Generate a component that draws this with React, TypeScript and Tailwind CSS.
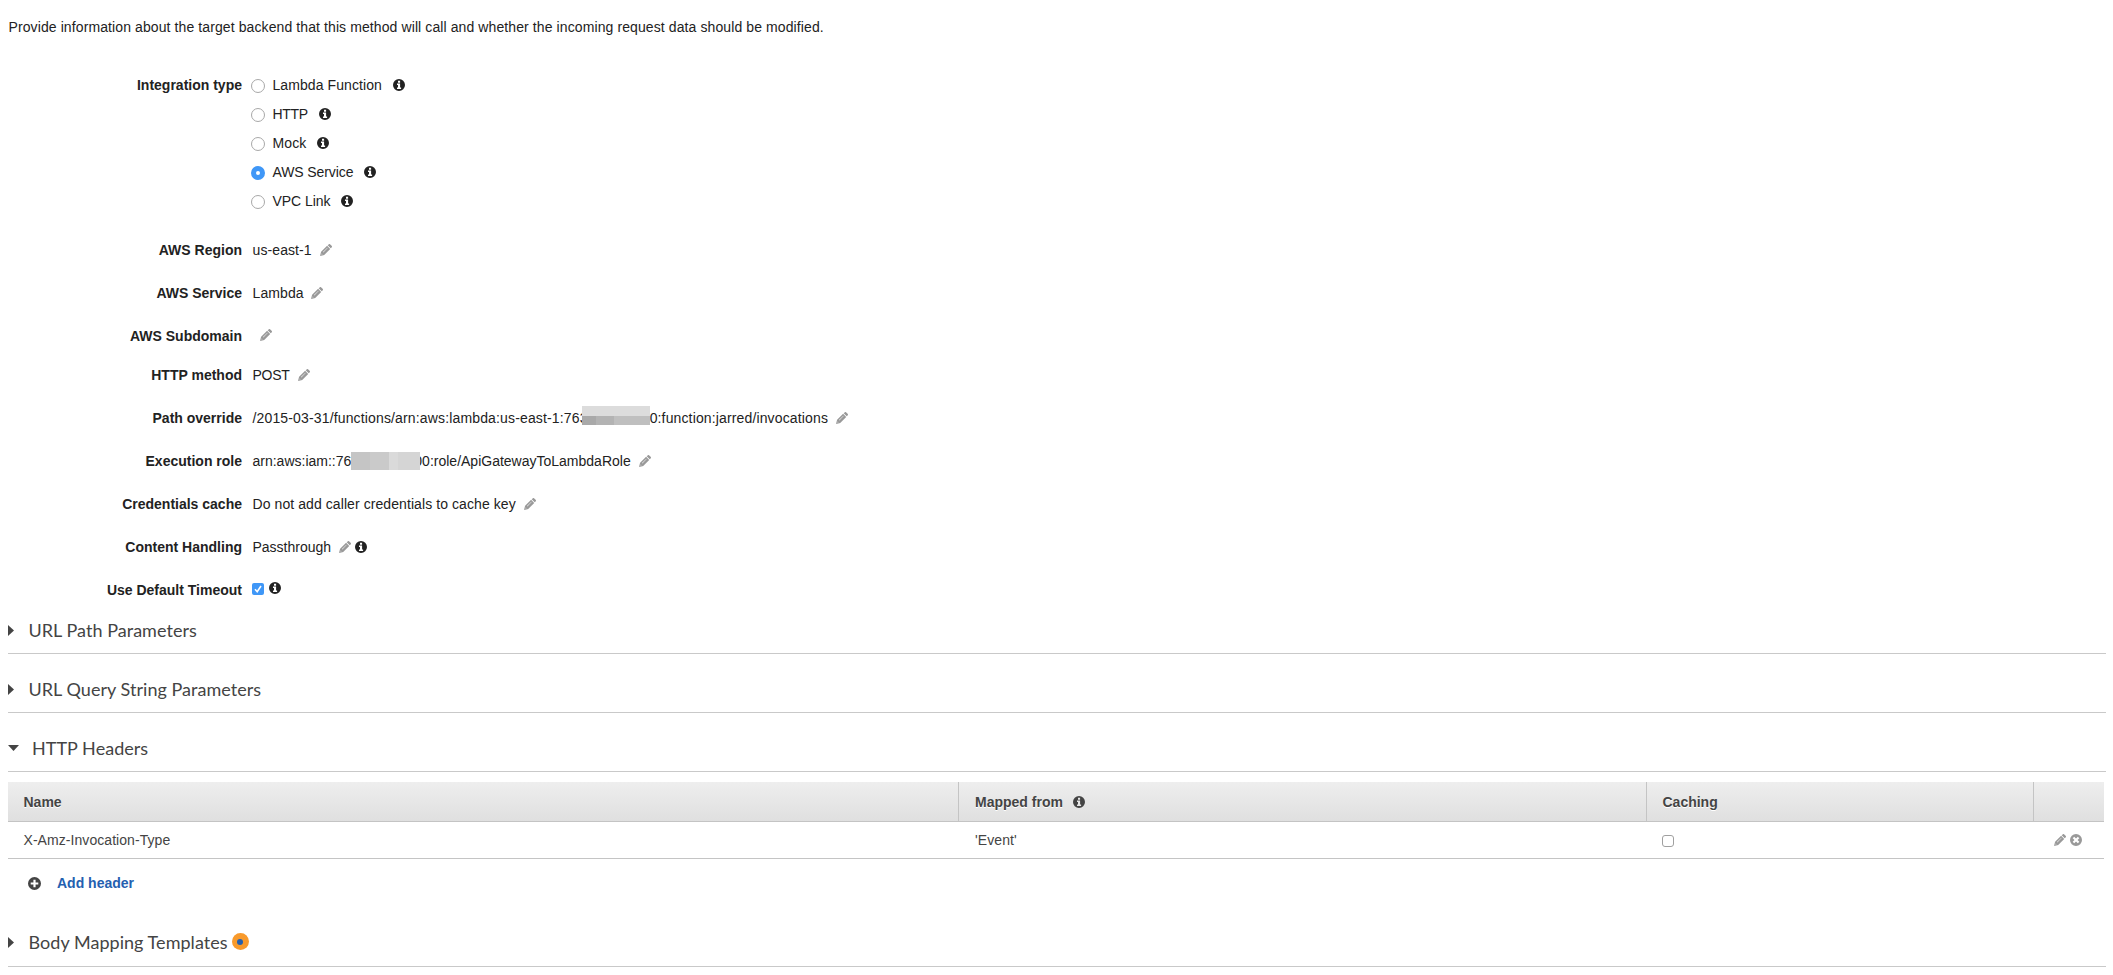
import { ReactNode, useState } from "react";

type SectionProps = {
  title: string;
  open?: boolean;
  className?: string;
  children?: ReactNode;
};

const integrationTypes = [
  { name: "Lambda Function", spacing: "tracking-[0.08px]" },
  { name: "HTTP", spacing: "tracking-[-0.35px]" },
  { name: "Mock", spacing: "tracking-[0.12px]" },
  { name: "AWS Service", spacing: "tracking-[-0.1px]" },
  { name: "VPC Link", spacing: "tracking-[-0.06px]" },
];

function InfoIcon({ className = "" }: { className?: string }) {
  return (
    <svg viewBox="0 0 24 24" className={`size-3 shrink-0 ${className}`} fill="currentColor">
      <path
        fillRule="evenodd"
        d="M12 0a12 12 0 1 0 0 24a12 12 0 0 0 0-24zM10 3.400h4.200v4h-4.200zM8 9.200h6.200v7.800h2v3H8v-3h2v-4.800H8z"
      />
    </svg>
  );
}

function PencilIcon({ className = "" }: { className?: string }) {
  return (
    <svg viewBox="0 0 24 24" className={`size-3 shrink-0 text-[#999] ${className}`} fill="currentColor">
      <path d="M17.200.800a2.400 2.400 0 0 1 3.400 0l2.600 2.600a2.400 2.400 0 0 1 0 3.400l-1.800 1.800-6-6z" />
      <path
        fillRule="evenodd"
        d="M14.200 3.600l6.200 6.200L8.400 21.800 0 24l2.200-8.400zM14.700 7.500l.6.600-8.700 8.700-.6-.6zM3.400 18.800l1.800 1.800-2.200.600z"
      />
    </svg>
  );
}

function RemoveIcon() {
  return (
    <svg viewBox="0 0 24 24" className="size-3 shrink-0 text-[#999]" fill="currentColor">
      <path
        fillRule="evenodd"
        d="M12 0a12 12 0 1 0 0 24a12 12 0 0 0 0-24zM8.400 5.400l3.600 3.600 3.600-3.600 3 3-3.600 3.600 3.600 3.600-3 3-3.600-3.600-3.600 3.600-3-3 3.600-3.600-3.600-3.600z"
      />
    </svg>
  );
}

function PlusIcon() {
  return (
    <svg viewBox="0 0 24 24" className="size-[13px] shrink-0 text-[#444]" fill="currentColor">
      <path
        fillRule="evenodd"
        d="M12 0a12 12 0 1 0 0 24a12 12 0 0 0 0-24zM10 5h4v5h5v4h-5v5h-4v-5H5v-4h5z"
      />
    </svg>
  );
}

function Field({ label, className = "h-[43px]", children }: { label: string; className?: string; children?: ReactNode }) {
  return (
    <div className={`flex items-start ${className}`}>
      <div className="w-[234px] shrink-0 text-right font-bold">{label}</div>
      <div className="ml-[10.5px] flex h-5 items-center whitespace-nowrap">{children}</div>
    </div>
  );
}

function SectionTitle({ title, open, className = "pb-[9px]", children }: SectionProps) {
  return (
    <div
      className={`flex h-[39px] items-center border-b border-[#c9c9c9] font-[Lato,sans-serif] text-[18px] text-[#444] ${className}`}
    >
      {open ? (
        <svg viewBox="0 0 11 6" className="mt-px mr-[13px] h-[6px] w-[11px]" fill="currentColor">
          <path d="M0 0h11L5.500 6z" />
        </svg>
      ) : (
        <svg viewBox="0 0 6 11" className="mt-px mr-[14.5px] h-[11px] w-[6px]" fill="currentColor">
          <path d="M0 0l6 5.500L0 11z" />
        </svg>
      )}
      <h2 className="leading-6 tracking-[0.04px]">{title}</h2>
      {children}
    </div>
  );
}

export default function App() {
  const [integrationType, setIntegrationType] = useState("AWS Service");
  const [defaultTimeout, setDefaultTimeout] = useState(true);

  return (
    <main className="h-[975px] overflow-hidden bg-white pr-2 pl-2 font-['Liberation_Sans',Arial,sans-serif] text-[14px] leading-5 text-[#222]">
      <p className="pt-[17px] pl-[0.5px] tracking-[0.1px]">
        Provide information about the target backend that this method will call and whether the incoming request data
        should be modified.
      </p>

      <div className="mt-[38px] flex h-[165px]">
        <div className="w-[234px] shrink-0 text-right font-bold">Integration type</div>
        <div className="ml-[9px] flex flex-col gap-[9px]">
          {integrationTypes.map(({ name, spacing }) => (
            <label key={name} className="flex h-5 items-center">
              <input
                type="radio"
                name="integration-type"
                checked={integrationType === name}
                onChange={() => setIntegrationType(name)}
                className="mt-[2px] size-[14px] appearance-none rounded-full border border-[#a8a8a8] bg-white checked:border-[5px] checked:border-[#3f97f7]"
              />
              <span className={`ml-[7.5px] ${spacing}`}>{name}</span>
              <InfoIcon className="ml-[11px]" />
            </label>
          ))}
        </div>
      </div>

      <Field label="AWS Region">
        <span className="tracking-[0.1px]">us-east-1</span> <PencilIcon className="ml-[8px]" />
      </Field>
      <Field label="AWS Service">
        <span className="tracking-[0.1px]">Lambda</span> <PencilIcon className="ml-[7.5px]" />
      </Field>
      <Field label="AWS Subdomain" className="h-[39px]">
        <PencilIcon className="mb-[3px] ml-[7.5px]" />
      </Field>
      <Field label="HTTP method">
        <span className="tracking-[-0.25px]">POST</span> <PencilIcon className="ml-[8px]" />
      </Field>
      <Field label="Path override">
        <span className="tracking-[0.15px]">/2015-03-31/functions/arn:aws:lambda:us-east-1:763</span>
        <span className="z-10 -mt-[5px] -ml-[6px] flex h-[19px] w-[68px] flex-col bg-[#dcdcdc]">
          <span className="mt-[10px] flex h-[9px]">
            <span className="w-[14px] bg-[#a9a9a9]" />
            <span className="w-[18px] bg-[#b3b3b3]" />
            <span className="flex-1 bg-[#bfbfbf]" />
          </span>
        </span>
        <span className="tracking-[0.14px]">0:function:jarred/invocations</span> <PencilIcon className="ml-[8px]" />
      </Field>
      <Field label="Execution role">
        arn:aws:iam::76
        <span className="z-10 flex h-[18px] w-[69px] bg-[#d5d5d5]">
          <span className="w-[19px] bg-[#c5c5c5]" />
          <span className="w-[19px] bg-[#cacaca]" />
          <span className="w-[9px] bg-[#dadada]" />
        </span>
        <span className="-ml-[6px]">00:role/ApiGatewayToLambdaRole</span> <PencilIcon className="ml-[8px]" />
      </Field>
      <Field label="Credentials cache">
        <span className="tracking-[0.08px]">Do not add caller credentials to cache key</span>{" "}
        <PencilIcon className="ml-[8px]" />
      </Field>
      <Field label="Content Handling">
        Passthrough <PencilIcon className="ml-[8px]" />
        <InfoIcon className="ml-[4px]" />
      </Field>
      <Field label="Use Default Timeout" className="h-[35px]">
        <label className="mb-[2px] -ml-[0.5px] flex size-3 items-center justify-center rounded-[2px] bg-[#3f97f7]">
          <input
            type="checkbox"
            checked={defaultTimeout}
            onChange={() => setDefaultTimeout(!defaultTimeout)}
            className="sr-only"
          />
          {defaultTimeout && (
            <svg viewBox="0 0 12 12" className="size-3" fill="none" stroke="white" strokeWidth="1.6">
              <path d="M3 6.300l2.200 2.400L9 3" />
            </svg>
          )}
        </label>
        <InfoIcon className="mb-[4px] ml-[4.5px]" />
      </Field>

      <div className="-mr-px">
        <SectionTitle title="URL Path Parameters" />
        <div className="h-5" />
        <SectionTitle title="URL Query String Parameters" />
        <div className="h-5" />
        <SectionTitle title="HTTP Headers" open />
      </div>

      <table className="mt-[10px] w-[2096px] table-fixed border-separate border-spacing-0 text-left text-[#444]">
        <thead>
          <tr className="bg-linear-to-b from-[#eeeeee] to-[#dfdfdf] [text-shadow:0_1px_0_#fff]">
            <th className="h-[40px] w-[951px] border-r border-b border-[#c4c4c4] pl-[15.5px]">Name</th>
            <th className="w-[688px] border-r border-b border-[#c4c4c4] pl-[16px]">
              <div className="flex items-center">
                Mapped from <InfoIcon className="ml-[10.5px]" />
              </div>
            </th>
            <th className="w-[387px] border-r border-b border-[#c4c4c4] pl-[15.5px]">Caching</th>
            <th className="border-b border-[#c4c4c4]" />
          </tr>
        </thead>
        <tbody>
          <tr>
            <td className="h-[37px] border-b border-[#c4c4c4] pl-[15.5px] tracking-[0.06px]">X-Amz-Invocation-Type</td>
            <td className="border-b border-[#c4c4c4] pl-[16px] tracking-[0.1px]">'Event'</td>
            <td className="border-b border-[#c4c4c4] pl-[15px]">
              <input
                type="checkbox"
                className="mt-[2px] block size-3 appearance-none rounded-[3px] border border-[#a0a0a0] bg-white"
              />
            </td>
            <td className="border-b border-[#c4c4c4]">
              <div className="flex justify-end gap-[4px] pr-[22.5px]">
                <PencilIcon />
                <RemoveIcon />
              </div>
            </td>
          </tr>
        </tbody>
      </table>

      <div className="mt-[14px] flex h-5 items-center pl-[20px]">
        <PlusIcon />
        <a className="ml-[16px] cursor-pointer font-bold text-[#2460b0]">Add header</a>
      </div>

      <div className="mt-[35px] -mr-px">
        <SectionTitle title="Body Mapping Templates" className="pb-[11px]">
          <span className="ml-[4px] flex size-[17px] items-center justify-center rounded-full bg-[#f89a2c]">
            <span className="size-[6px] rounded-full bg-[#2460b0]" />
          </span>
        </SectionTitle>
      </div>
    </main>
  );
}
